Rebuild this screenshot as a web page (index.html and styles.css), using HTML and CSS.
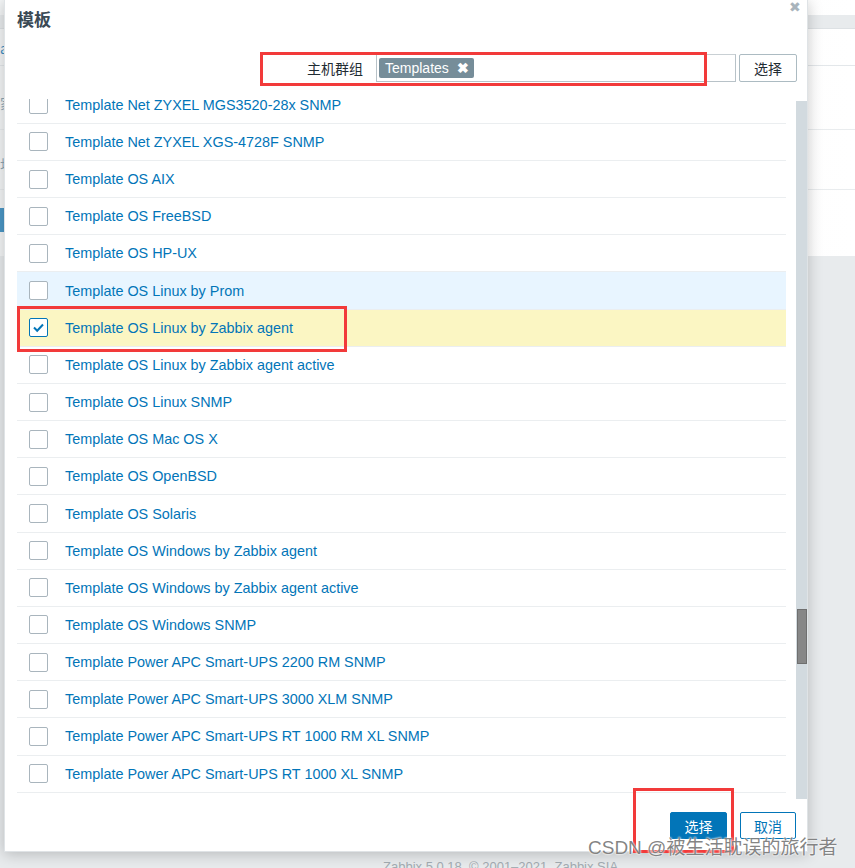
FILE: index.html
```html
<!DOCTYPE html>
<html lang="zh">
<head>
<meta charset="utf-8">
<title>模板</title>
<link rel="stylesheet" href="styles.css">
</head>
<body>
<div class="page">
  <div class="page-top">
    <div class="page-band"></div>
    <div class="page-nav"><span class="frag">ai</span></div>
    <div class="page-line line-1"><span class="frag">家</span></div>
    <div class="page-line line-2"><span class="frag">址</span></div>
    <div class="page-btn"></div>
  </div>
  <div class="page-rest">
    <div class="page-footer">Zabbix 5.0.18. © 2001–2021, Zabbix SIA</div>
  </div>
</div>

<div class="dialog">
  <div class="dlg-head">
    <h4 class="dlg-title">模板</h4>
    <span class="dlg-close">✖</span>
  </div>
  <div class="filter">
    <span class="filter-label">主机群组</span>
    <div class="multiselect"><span class="tag">Templates <b class="tag-x">✖</b></span></div>
    <button class="btn-alt">选择</button>
  </div>
  <div class="dlg-body">
    <div class="scroll">
      <ul class="list">
        <li class="row"><span class="cb"></span><a class="lnk">Template Net ZYXEL MGS3520-28x SNMP</a></li>
        <li class="row"><span class="cb"></span><a class="lnk">Template Net ZYXEL XGS-4728F SNMP</a></li>
        <li class="row"><span class="cb"></span><a class="lnk">Template OS AIX</a></li>
        <li class="row"><span class="cb"></span><a class="lnk">Template OS FreeBSD</a></li>
        <li class="row"><span class="cb"></span><a class="lnk">Template OS HP-UX</a></li>
        <li class="row row-hover"><span class="cb"></span><a class="lnk">Template OS Linux by Prom</a></li>
        <li class="row row-sel"><span class="cb cb-on"><svg viewBox="0 0 19 19" width="19" height="19"><polyline points="5,9.5 8.2,12.7 14,6.5" fill="none" stroke="#0275b8" stroke-width="2"/></svg></span><a class="lnk">Template OS Linux by Zabbix agent</a></li>
        <li class="row"><span class="cb"></span><a class="lnk">Template OS Linux by Zabbix agent active</a></li>
        <li class="row"><span class="cb"></span><a class="lnk">Template OS Linux SNMP</a></li>
        <li class="row"><span class="cb"></span><a class="lnk">Template OS Mac OS X</a></li>
        <li class="row"><span class="cb"></span><a class="lnk">Template OS OpenBSD</a></li>
        <li class="row"><span class="cb"></span><a class="lnk">Template OS Solaris</a></li>
        <li class="row"><span class="cb"></span><a class="lnk">Template OS Windows by Zabbix agent</a></li>
        <li class="row"><span class="cb"></span><a class="lnk">Template OS Windows by Zabbix agent active</a></li>
        <li class="row"><span class="cb"></span><a class="lnk">Template OS Windows SNMP</a></li>
        <li class="row"><span class="cb"></span><a class="lnk">Template Power APC Smart-UPS 2200 RM SNMP</a></li>
        <li class="row"><span class="cb"></span><a class="lnk">Template Power APC Smart-UPS 3000 XLM SNMP</a></li>
        <li class="row"><span class="cb"></span><a class="lnk">Template Power APC Smart-UPS RT 1000 RM XL SNMP</a></li>
        <li class="row"><span class="cb"></span><a class="lnk">Template Power APC Smart-UPS RT 1000 XL SNMP</a></li>
      </ul>
    </div>
    <div class="scrollbar"><div class="thumb"></div></div>
  </div>
  <div class="dlg-foot">
    <button class="btn-main">选择</button>
    <button class="btn-cancel">取消</button>
  </div>
</div>

<div class="mark mark-1"></div>
<div class="mark mark-2"></div>
<div class="mark mark-3"></div>
<div class="watermark">CSDN @被生活耽误的旅行者</div>
</body>
</html>
```

FILE: styles.css
```css
* { box-sizing: border-box; }
html, body { margin: 0; padding: 0; }
body {
  width: 855px;
  height: 868px;
  overflow: hidden;
  position: relative;
  font-family: "Liberation Sans", Arial, "Noto Sans CJK SC", sans-serif;
  background: #ebeef0;
}

/* background page */
.page { display: flex; flex-direction: column; height: 868px; }
.page-top {
  height: 256px;
  background: linear-gradient(90deg, #f4f6f7 0%, #ffffff 100%);
  display: flex;
  flex-direction: column;
}
.page-band { margin-top: 15px; height: 14px; background: #e8ebed; border-bottom: 1px solid #dde1e4; }
.page-nav { height: 37px; border-bottom: 1px solid #e3e7ea; padding-top: 11px; }
.page-line { border-bottom: 1px solid #e9ecee; }
.line-1 { height: 64px; padding-top: 29px; }
.line-2 { height: 60px; padding-top: 26px; }
.frag { font-size: 14px; line-height: 16px; color: #8fa6b5; font-family: "Noto Sans CJK SC", sans-serif; }
.page-nav .frag { color: #3f8fc4; }
.page-btn { width: 40px; height: 24px; margin-top: 18px; background: #4b97c6; }
.page-rest { flex: 1; background: #e8ebed; display: flex; flex-direction: column; justify-content: flex-end; }
.page-footer { padding-left: 383px; font-size: 13px; color: #a3acb2; height: 10px; line-height: 18px; overflow: visible; }

/* dialog */
.dialog {
  position: absolute;
  left: 4px;
  top: 0;
  width: 804px;
  height: 852px;
  background: #fff;
  border: 1px solid #dfe3e6;
  border-top: none;
  box-shadow: 0 2px 14px rgba(0, 0, 0, 0.22);
  display: flex;
  flex-direction: column;
}
.dlg-head {
  height: 52px;
  display: flex;
  justify-content: space-between;
  align-items: flex-start;
  padding-left: 12px;
  padding-right: 6px;
}
.dlg-title {
  margin: 8px 0 0;
  font-size: 17px;
  line-height: 22px;
  font-weight: bold;
  color: #3b4a55;
  font-family: "Noto Sans CJK SC", sans-serif;
}
.dlg-close { font-size: 14px; color: #a9b4bc; margin-top: 0; line-height: 14px; }

.filter {
  height: 29px;
  display: flex;
  justify-content: flex-end;
  align-items: center;
  padding-right: 10px;
  margin-top: 1px;
}
.filter-label {
  font-size: 14px;
  color: #1f2c33;
  margin-right: 13px;
  font-family: "Noto Sans CJK SC", sans-serif;
}
.multiselect {
  width: 360px;
  height: 28px;
  border: 1px solid #b8c2c8;
  border-top-color: #c9d0d4;
  padding: 3px 2px;
  display: flex;
  align-items: center;
}
.tag {
  display: inline-flex;
  align-items: center;
  height: 20px;
  padding: 0 5px 0 6px;
  background: #768d99;
  border-radius: 2px;
  color: #fff;
  font-size: 14px;
}
.tag-x { font-size: 14px; margin-left: 8px; font-weight: bold; }
.btn-alt {
  margin-left: 3px;
  width: 58px;
  height: 28px;
  background: #fff;
  border: 1px solid #acbbc2;
  border-radius: 2px;
  font-size: 14px;
  color: #1f2c33;
  font-family: "Noto Sans CJK SC", sans-serif;
  padding: 0;
}

.dlg-body {
  margin-top: 17px;
  height: 700px;
  display: flex;
  align-items: flex-start;
  padding-left: 12px;
}
.scroll { width: 770px; height: 700px; overflow: hidden; }
.list { list-style: none; margin: -12.3px 0 0; padding: 0; }
.row {
  height: 37.17px;
  border-bottom: 1px solid #ebeef0;
  display: flex;
  align-items: center;
  padding-left: 12px;
}
.row-hover { background: #e8f5ff; }
.row-sel { background: #fbf6c3; }
.cb {
  width: 19px;
  height: 19px;
  border: 1px solid #a9b5bd;
  border-radius: 2px;
  background: #fff;
  flex: none;
  position: relative;
}
.cb-on { border-color: #0275b8; }
.cb svg { position: absolute; left: -1px; top: -1px; }
.lnk {
  margin-left: 17px;
  font-size: 14.4px;
  color: #0275b8;
  white-space: nowrap;
}
.scrollbar {
  margin-left: 10px;
  margin-top: 2px;
  width: 11px;
  height: 698px;
  background: #d2dadf;
  padding-top: 508px;
  padding-left: 1px;
}
.thumb {
  width: 10px;
  height: 55px;
  background: #878787;
  border: 1px solid #6f6f6f;
}

.dlg-foot {
  flex: 1;
  display: flex;
  justify-content: flex-end;
  align-items: flex-start;
  padding-top: 13px;
  padding-right: 11px;
  gap: 13px;
}
.btn-main, .btn-cancel {
  height: 27px;
  border-radius: 2px;
  font-size: 14px;
  font-family: "Noto Sans CJK SC", sans-serif;
  padding: 0;
}
.btn-main { width: 57px; background: #0275b8; border: 1px solid #0275b8; color: #fff; }
.btn-cancel { width: 56px; background: #fff; border: 1px solid #0275b8; color: #0275b8; }

/* annotations */
.mark { position: absolute; border: 3px solid #f23a3a; }
.mark-1 { left: 260px; top: 52px; width: 447px; height: 34px; }
.mark-2 { left: 17px; top: 306px; width: 330px; height: 46px; }
.mark-3 { left: 633px; top: 788px; width: 101px; height: 65px; }

.watermark {
  position: absolute;
  left: 588px;
  top: 834px;
  font-size: 19px;
  line-height: 28px;
  color: rgba(110, 110, 110, 0.85);
  font-family: "Liberation Sans", "Noto Sans CJK SC", sans-serif;
  text-shadow: 0 0 2px #fff, 0 0 2px #fff;
  white-space: nowrap;
}
```
